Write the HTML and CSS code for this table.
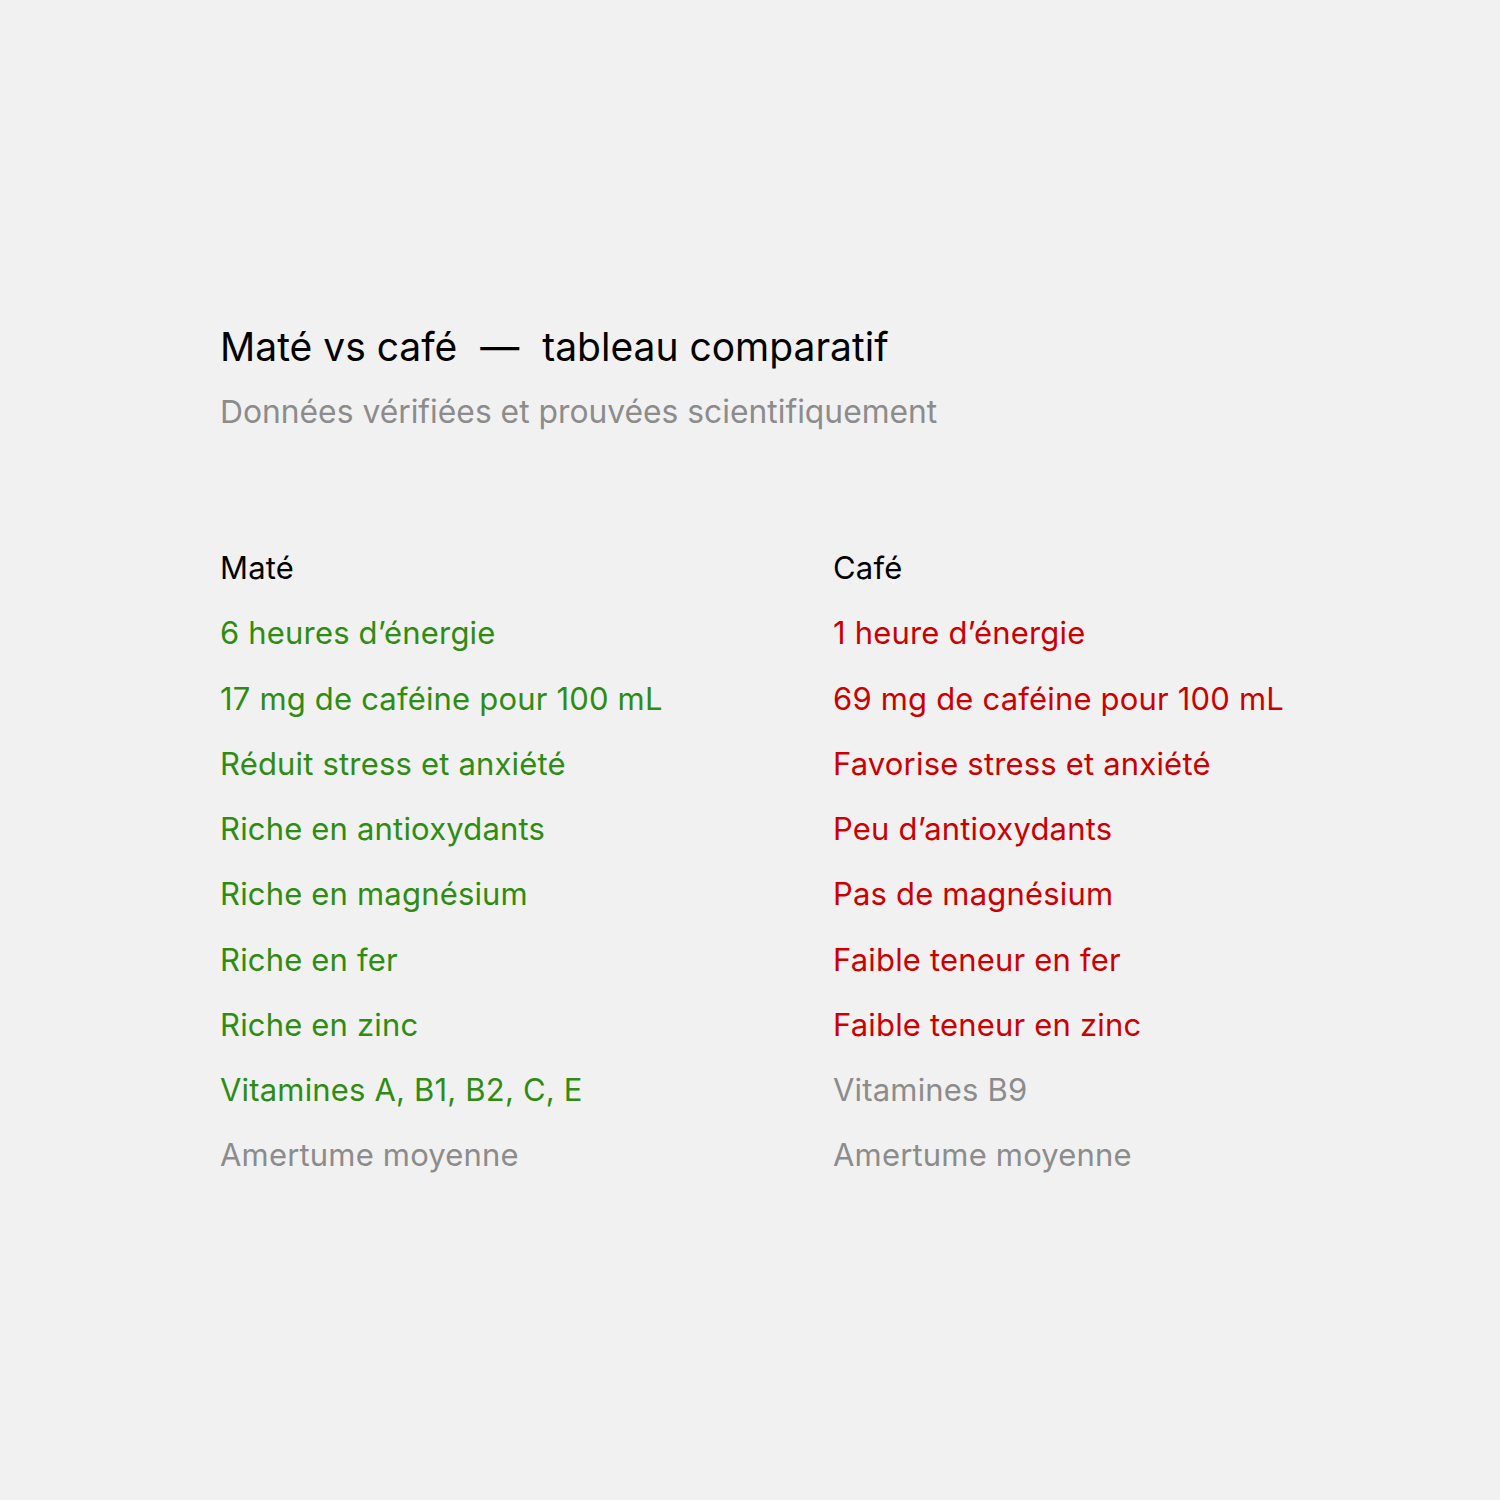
FILE: index.html
```html
<!DOCTYPE html>
<html lang="fr">
<head>
<meta charset="utf-8">
<link rel="stylesheet" href="styles.css">
</head>
<body>
<main class="page">
  <header class="head">
    <h1 class="title">Maté vs café <span class="dash">—</span> tableau comparatif</h1>
    <p class="subtitle">Données vérifiées et prouvées scientifiquement</p>
  </header>
  <section class="table">
    <div class="col">
      <div class="cell th">Maté</div>
      <div class="cell good">6 heures d’énergie</div>
      <div class="cell good">17 mg de caféine pour 100 mL</div>
      <div class="cell good">Réduit stress et anxiété</div>
      <div class="cell good">Riche en antioxydants</div>
      <div class="cell good">Riche en magnésium</div>
      <div class="cell good">Riche en fer</div>
      <div class="cell good">Riche en zinc</div>
      <div class="cell good">Vitamines A, B1, B2, C, E</div>
      <div class="cell neutral">Amertume moyenne</div>
    </div>
    <div class="col">
      <div class="cell th">Café</div>
      <div class="cell bad">1 heure d’énergie</div>
      <div class="cell bad">69 mg de caféine pour 100 mL</div>
      <div class="cell bad">Favorise stress et anxiété</div>
      <div class="cell bad">Peu d’antioxydants</div>
      <div class="cell bad">Pas de magnésium</div>
      <div class="cell bad">Faible teneur en fer</div>
      <div class="cell bad">Faible teneur en zinc</div>
      <div class="cell neutral">Vitamines B9</div>
      <div class="cell neutral">Amertume moyenne</div>
    </div>
  </section>
</main>
</body>
</html>
```

FILE: styles.css
```css
html, body {
  margin: 0;
  padding: 0;
  background: #f1f1f1;
}
body {
  font-family: Inter, "Noto Sans", sans-serif;
  width: 1500px;
  height: 1500px;
}
.page {
  padding: 320px 0 0 220px;
}
.title {
  margin: 0;
  font-size: 39px;
  font-weight: 400;
  line-height: 54px;
  color: #000;
}
.dash {
  margin: 0 12px;
}
.subtitle {
  margin: 16px 0 0;
  font-size: 31.8px;
  line-height: 44px;
  color: #8c8c8c;
}
.table {
  display: grid;
  grid-template-columns: 613px 613px;
  margin-top: 101px;
}
.cell {
  font-size: 31px;
  letter-spacing: 0.18px;
  line-height: 65.25px;
  white-space: nowrap;
}
.th { color: #000; }
.good { color: #2f8c12; }
.bad { color: #cc0000; }
.neutral { color: #8c8c8c; }
```
